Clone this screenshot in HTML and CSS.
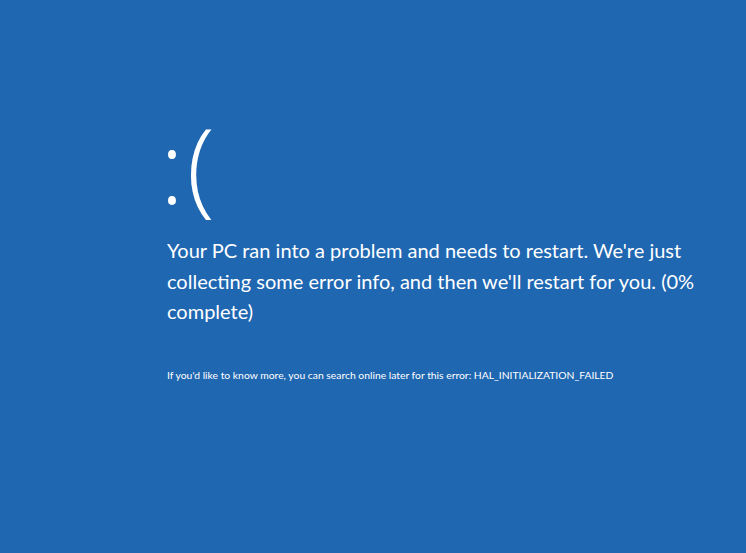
FILE: index.html
```html
<!DOCTYPE html>
<html>
<head>
<meta charset="utf-8">
<link rel="stylesheet" href="styles.css">
</head>
<body>
<main class="screen">
  <div class="face"><span class="colon">:</span><span class="paren">(</span></div>
  <p class="message">Your PC ran into a problem and needs to restart. We're just collecting some error info, and then we'll restart for you. (0% complete)</p>
  <p class="detail">If you'd like to know more, you can search online later for this error: HAL_INITIALIZATION_FAILED</p>
</main>
</body>
</html>
```
FILE: styles.css
```css
html, body {
  margin: 0;
  padding: 0;
  background: #2067b2;
  height: 100%;
  overflow: hidden;
}
.screen {
  padding: 104px 40px 0 160px;
  color: #ffffff;
  font-family: "Lato", "Open Sans", sans-serif;
}
.face {
  font-family: "Open Sans", sans-serif;
  font-weight: 300;
  font-size: 103px;
  line-height: 120px;
  height: 123px;
  margin: 0;
}
.colon {
  font-size: 100px;
  margin-right: 3px;
}
.message {
  margin: 8px 0 0 0;
  padding-left: 7px;
  max-width: 530px;
  font-size: 20px;
  line-height: 30.5px;
  font-weight: 400;
}
.detail {
  margin: 40px 0 0 0;
  padding-left: 7px;
  font-size: 10.35px;
  line-height: 16px;
}
```
